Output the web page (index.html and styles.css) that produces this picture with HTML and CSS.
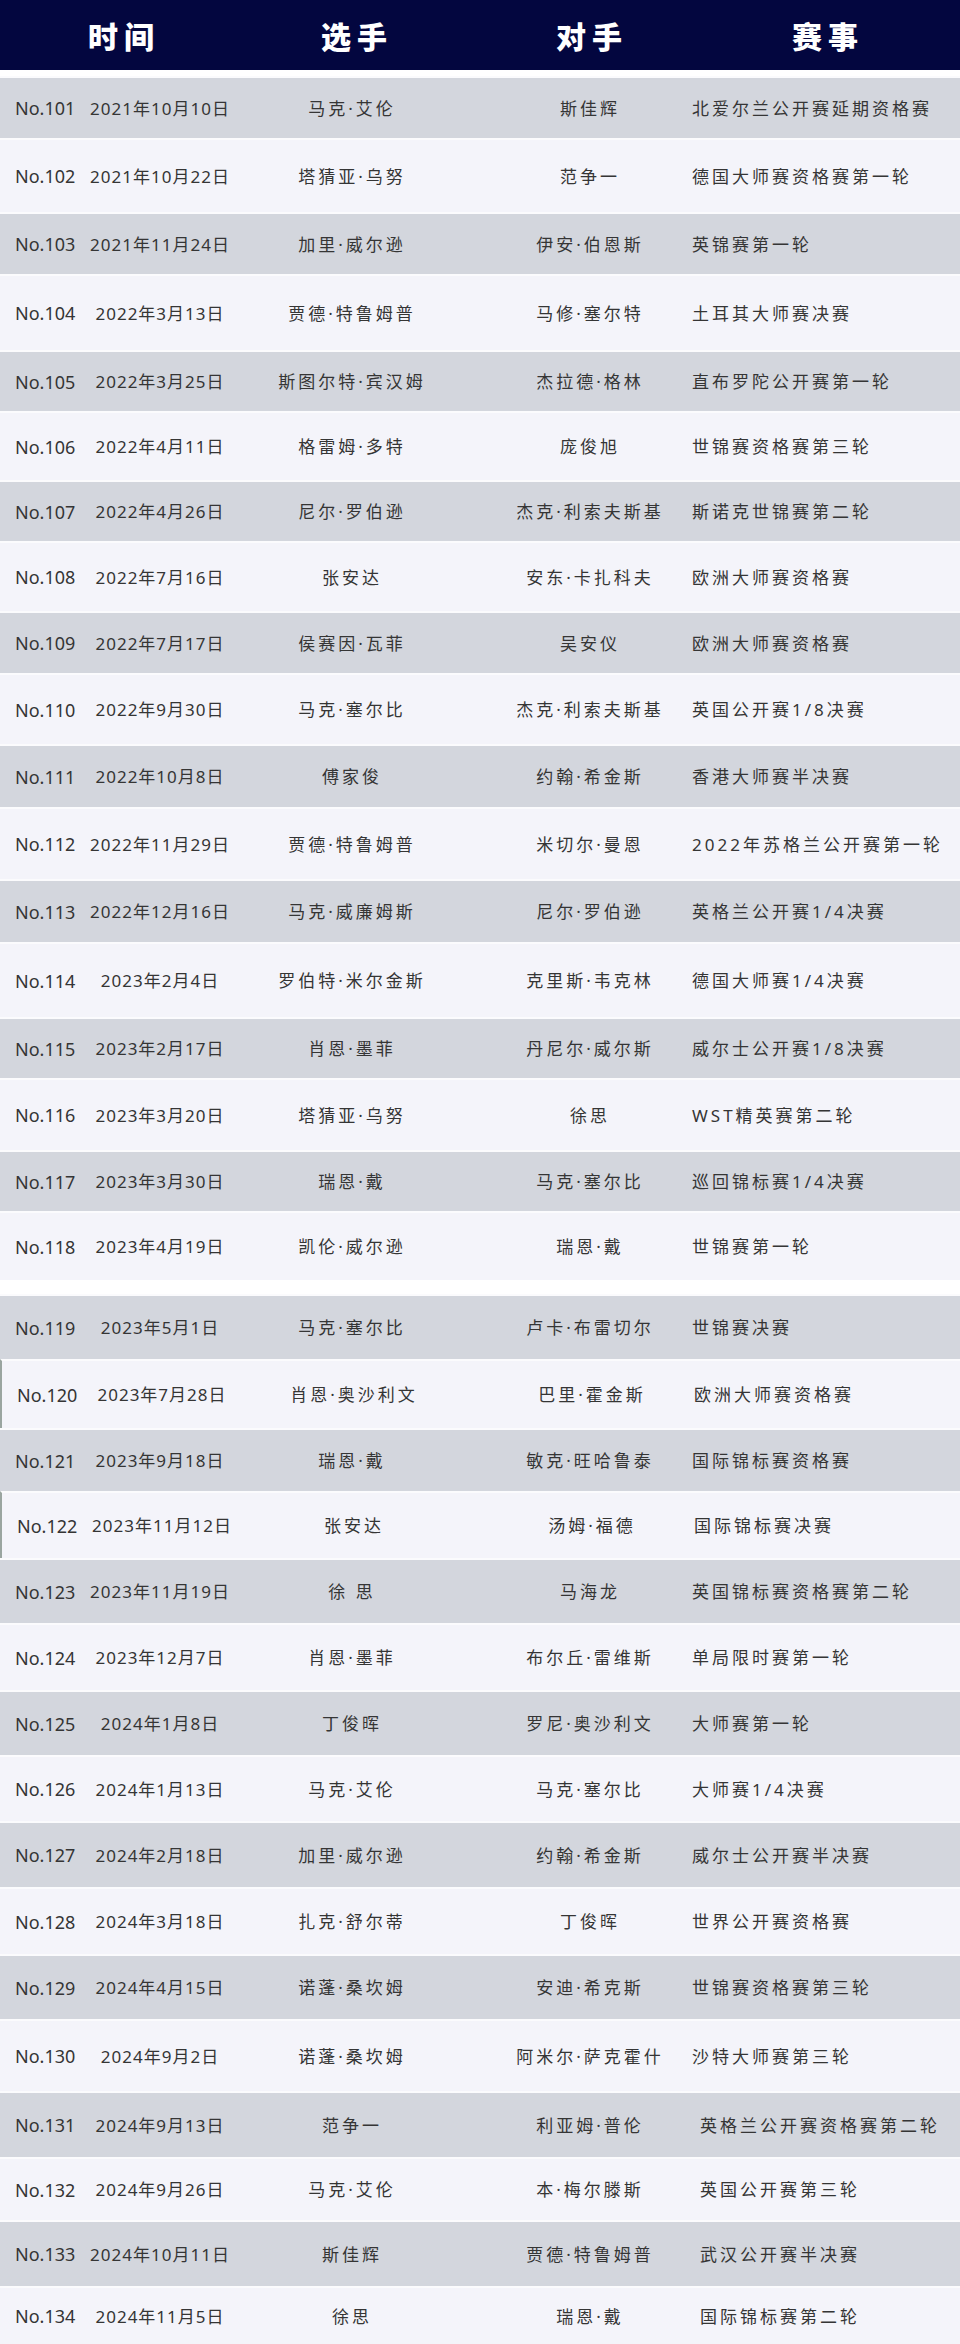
FILE: index.html
```html
<!DOCTYPE html>
<html lang="zh-CN">
<head>
<meta charset="utf-8">
<title>赛事记录</title>
<link rel="stylesheet" href="styles.css">
</head>
<body>
<div class="page">
  <div class="head">
    <div class="hc c1">时间</div>
    <div class="hc c2">选手</div>
    <div class="hc c3">对手</div>
    <div class="hc c4">赛事</div>
  </div>
  <div class="gap"></div>
  <div class="list">
    <div class="row g h62"><span class="no">No.101</span><span class="date">2021年10月10日</span><span class="p">马克·艾伦</span><span class="o">斯佳辉</span><span class="e">北爱尔兰公开赛延期资格赛</span></div>
    <div class="row l h74"><span class="no">No.102</span><span class="date">2021年10月22日</span><span class="p">塔猜亚·乌努</span><span class="o">范争一</span><span class="e">德国大师赛资格赛第一轮</span></div>
    <div class="row g h62"><span class="no">No.103</span><span class="date">2021年11月24日</span><span class="p">加里·威尔逊</span><span class="o">伊安·伯恩斯</span><span class="e">英锦赛第一轮</span></div>
    <div class="row l h76"><span class="no">No.104</span><span class="date">2022年3月13日</span><span class="p">贾德·特鲁姆普</span><span class="o">马修·塞尔特</span><span class="e">土耳其大师赛决赛</span></div>
    <div class="row g h61"><span class="no">No.105</span><span class="date">2022年3月25日</span><span class="p">斯图尔特·宾汉姆</span><span class="o">杰拉德·格林</span><span class="e">直布罗陀公开赛第一轮</span></div>
    <div class="row l h69"><span class="no">No.106</span><span class="date">2022年4月11日</span><span class="p">格雷姆·多特</span><span class="o">庞俊旭</span><span class="e">世锦赛资格赛第三轮</span></div>
    <div class="row g h61"><span class="no">No.107</span><span class="date">2022年4月26日</span><span class="p">尼尔·罗伯逊</span><span class="o">杰克·利索夫斯基</span><span class="e">斯诺克世锦赛第二轮</span></div>
    <div class="row l h70"><span class="no">No.108</span><span class="date">2022年7月16日</span><span class="p">张安达</span><span class="o">安东·卡扎科夫</span><span class="e">欧洲大师赛资格赛</span></div>
    <div class="row g h62"><span class="no">No.109</span><span class="date">2022年7月17日</span><span class="p">侯赛因·瓦菲</span><span class="o">吴安仪</span><span class="e">欧洲大师赛资格赛</span></div>
    <div class="row l h71"><span class="no">No.110</span><span class="date">2022年9月30日</span><span class="p">马克·塞尔比</span><span class="o">杰克·利索夫斯基</span><span class="e">英国公开赛1/8决赛</span></div>
    <div class="row g h63"><span class="no">No.111</span><span class="date">2022年10月8日</span><span class="p">傅家俊</span><span class="o">约翰·希金斯</span><span class="e">香港大师赛半决赛</span></div>
    <div class="row l h72"><span class="no">No.112</span><span class="date">2022年11月29日</span><span class="p">贾德·特鲁姆普</span><span class="o">米切尔·曼恩</span><span class="e">2022年苏格兰公开赛第一轮</span></div>
    <div class="row g h63"><span class="no">No.113</span><span class="date">2022年12月16日</span><span class="p">马克·威廉姆斯</span><span class="o">尼尔·罗伯逊</span><span class="e">英格兰公开赛1/4决赛</span></div>
    <div class="row l h75"><span class="no">No.114</span><span class="date">2023年2月4日</span><span class="p">罗伯特·米尔金斯</span><span class="o">克里斯·韦克林</span><span class="e">德国大师赛1/4决赛</span></div>
    <div class="row g h61"><span class="no">No.115</span><span class="date">2023年2月17日</span><span class="p">肖恩·墨菲</span><span class="o">丹尼尔·威尔斯</span><span class="e">威尔士公开赛1/8决赛</span></div>
    <div class="row l h72"><span class="no">No.116</span><span class="date">2023年3月20日</span><span class="p">塔猜亚·乌努</span><span class="o">徐思</span><span class="e">WST精英赛第二轮</span></div>
    <div class="row g h61"><span class="no">No.117</span><span class="date">2023年3月30日</span><span class="p">瑞恩·戴</span><span class="o">马克·塞尔比</span><span class="e">巡回锦标赛1/4决赛</span></div>
    <div class="row l h69 tail"><span class="no">No.118</span><span class="date">2023年4月19日</span><span class="p">凯伦·威尔逊</span><span class="o">瑞恩·戴</span><span class="e">世锦赛第一轮</span></div>
    <div class="row g h65"><span class="no">No.119</span><span class="date">2023年5月1日</span><span class="p">马克·塞尔比</span><span class="o">卢卡·布雷切尔</span><span class="e">世锦赛决赛</span></div>
    <div class="row l h69 edge"><span class="no">No.120</span><span class="date">2023年7月28日</span><span class="p">肖恩·奥沙利文</span><span class="o">巴里·霍金斯</span><span class="e">欧洲大师赛资格赛</span></div>
    <div class="row g h63"><span class="no">No.121</span><span class="date">2023年9月18日</span><span class="p">瑞恩·戴</span><span class="o">敏克·旺哈鲁泰</span><span class="e">国际锦标赛资格赛</span></div>
    <div class="row l h67 edge"><span class="no">No.122</span><span class="date">2023年11月12日</span><span class="p">张安达</span><span class="o">汤姆·福德</span><span class="e">国际锦标赛决赛</span></div>
    <div class="row g h65"><span class="no">No.123</span><span class="date">2023年11月19日</span><span class="p">徐 思</span><span class="o">马海龙</span><span class="e">英国锦标赛资格赛第二轮</span></div>
    <div class="row l h67"><span class="no">No.124</span><span class="date">2023年12月7日</span><span class="p">肖恩·墨菲</span><span class="o">布尔丘·雷维斯</span><span class="e">单局限时赛第一轮</span></div>
    <div class="row g h65"><span class="no">No.125</span><span class="date">2024年1月8日</span><span class="p">丁俊晖</span><span class="o">罗尼·奥沙利文</span><span class="e">大师赛第一轮</span></div>
    <div class="row l h66"><span class="no">No.126</span><span class="date">2024年1月13日</span><span class="p">马克·艾伦</span><span class="o">马克·塞尔比</span><span class="e">大师赛1/4决赛</span></div>
    <div class="row g h66"><span class="no">No.127</span><span class="date">2024年2月18日</span><span class="p">加里·威尔逊</span><span class="o">约翰·希金斯</span><span class="e">威尔士公开赛半决赛</span></div>
    <div class="row l h67"><span class="no">No.128</span><span class="date">2024年3月18日</span><span class="p">扎克·舒尔蒂</span><span class="o">丁俊晖</span><span class="e">世界公开赛资格赛</span></div>
    <div class="row g h65"><span class="no">No.129</span><span class="date">2024年4月15日</span><span class="p">诺蓬·桑坎姆</span><span class="o">安迪·希克斯</span><span class="e">世锦赛资格赛第三轮</span></div>
    <div class="row l h72"><span class="no">No.130</span><span class="date">2024年9月2日</span><span class="p">诺蓬·桑坎姆</span><span class="o">阿米尔·萨克霍什</span><span class="e">沙特大师赛第三轮</span></div>
    <div class="row g h66"><span class="no">No.131</span><span class="date">2024年9月13日</span><span class="p">范争一</span><span class="o">利亚姆·普伦</span><span class="e in">英格兰公开赛资格赛第二轮</span></div>
    <div class="row l h63"><span class="no">No.132</span><span class="date">2024年9月26日</span><span class="p">马克·艾伦</span><span class="o">本·梅尔滕斯</span><span class="e in">英国公开赛第三轮</span></div>
    <div class="row g h66"><span class="no">No.133</span><span class="date">2024年10月11日</span><span class="p">斯佳辉</span><span class="o">贾德·特鲁姆普</span><span class="e in">武汉公开赛半决赛</span></div>
    <div class="row l h58"><span class="no">No.134</span><span class="date">2024年11月5日</span><span class="p">徐思</span><span class="o">瑞恩·戴</span><span class="e in">国际锦标赛第二轮</span></div>
  </div>
</div>
</body>
</html>
```

FILE: styles.css
```css
* { box-sizing: border-box; }
html, body { margin: 0; padding: 0; background: #ffffff; }
body {
  font-family: "Noto Sans", "Noto Sans CJK SC", sans-serif;
  color: #353535;
}
.page { width: 960px; }

.head {
  height: 70px;
  background: #03063f;
  display: grid;
  grid-template-columns: 242px 224px 246px 226px 1fr;
  align-items: center;
}
.hc {
  color: #ffffff;
  font-family: "Noto Sans CJK SC", sans-serif;
  font-size: 30px;
  font-weight: 900;
  letter-spacing: 6px;
  text-align: center;
  padding-left: 6px;
  line-height: 1;
}
.gap { height: 6px; background: #ffffff; }

.list { display: flex; flex-direction: column; }

.row {
  display: grid;
  grid-template-columns: 84px 152px 232px 224px 1fr;
  align-items: center;
  font-size: 17px;
  line-height: 1;
  border-top: 2px solid #fbfbfd;
}
.row.g { background: #d3d6dd; }
.row.l { background: #f4f4fa; }
.row.tail { border-bottom: 14px solid #ffffff; }
.row.edge { border-left: 2px solid #9aa5a0; }

.no {
  padding-left: 15px;
  font-size: 18px;
  letter-spacing: 0;
}
.date {
  text-align: center;
  letter-spacing: 1px;
}
.p {
  text-align: center;
  letter-spacing: 3px;
}
.o {
  text-align: center;
  padding-left: 20px;
  letter-spacing: 3px;
}
.e {
  padding-left: 0;
  letter-spacing: 3px;
}
.e.in { padding-left: 8px; }

.h58 { height: 58px; }
.h61 { height: 61px; }
.h62 { height: 62px; }
.h63 { height: 63px; }
.h65 { height: 65px; }
.h66 { height: 66px; }
.h67 { height: 67px; }
.h69 { height: 69px; }
.h70 { height: 70px; }
.h71 { height: 71px; }
.h72 { height: 72px; }
.h74 { height: 74px; }
.h75 { height: 75px; }
.h76 { height: 76px; }
.row.tail.h69 { height: 83px; }
```
